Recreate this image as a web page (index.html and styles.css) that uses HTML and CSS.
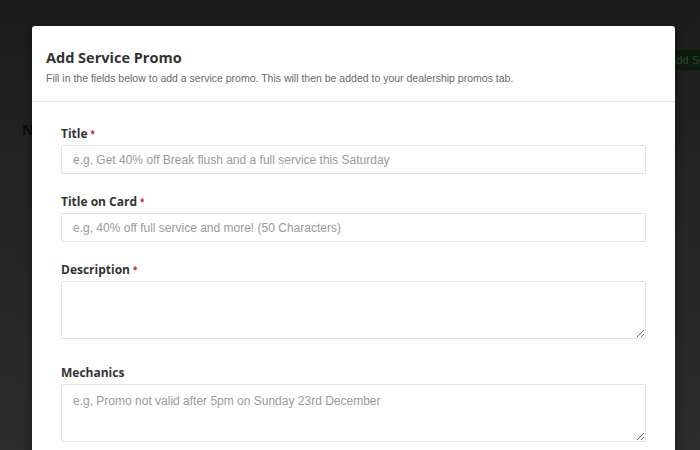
FILE: index.html
```html
<!DOCTYPE html>
<html>
<head>
<meta charset="utf-8">
<link rel="stylesheet" href="styles.css">
</head>
<body>
<div class="page">
  <div class="toolbar">
    <button class="bg-btn">Add Service Promo</button>
  </div>
  <h2 class="bg-heading">New Promos</h2>
</div>
<div class="modal">
  <div class="modal-header">
    <h1 class="modal-title">Add Service Promo</h1>
    <p class="modal-sub">Fill in the fields below to add a service promo. This will then be added to your dealership promos tab.</p>
  </div>
  <div class="modal-body">
    <div class="field">
      <label class="label">Title<span class="req">*</span></label>
      <input class="input" type="text" placeholder="e.g, Get 40% off Break flush and a full service this Saturday">
    </div>
    <div class="field">
      <label class="label">Title on Card<span class="req">*</span></label>
      <input class="input" type="text" placeholder="e.g, 40% off full service and more! (50 Characters)">
    </div>
    <div class="field field-area">
      <label class="label">Description<span class="req">*</span></label>
      <textarea class="textarea"></textarea>
    </div>
    <div class="field field-area">
      <label class="label">Mechanics</label>
      <textarea class="textarea" placeholder="e.g, Promo not valid after 5pm on Sunday 23rd December"></textarea>
    </div>
  </div>
</div>
</body>
</html>
```

FILE: styles.css
```css
html, body {
  margin: 0;
  padding: 0;
  height: 100%;
  overflow: hidden;
}
body {
  background: linear-gradient(to bottom, #1b1b1b 0%, #242424 40%, #2b2b2b 100%);
  font-family: "Liberation Sans", Arial, sans-serif;
}
.page {
  height: 100%;
}
.toolbar {
  display: flex;
  padding: 50px 0 0 659px;
}
.bg-btn {
  flex: none;
  height: 20px;
  padding: 0 10px;
  border: 0;
  border-radius: 2px;
  background: #0a1d0a;
  color: #34423a;
  font-family: "Liberation Sans", Arial, sans-serif;
  font-size: 11px;
  white-space: nowrap;
}
.bg-heading {
  margin: 50px 0 0 22px;
  font-family: "Open Sans", sans-serif;
  font-weight: 700;
  font-size: 14px;
  color: #0c0c0c;
  white-space: nowrap;
}
.modal {
  position: absolute;
  left: 32px;
  top: 26px;
  width: 643px;
  height: 440px;
  background: #fff;
  border-radius: 3px;
  box-shadow: 0 2px 10px rgba(0,0,0,0.4);
}
.modal-header {
  padding: 23px 14px 16px;
  border-bottom: 1px solid #e8e8e8;
}
.modal-title {
  margin: 0;
  font-family: "Open Sans", sans-serif;
  font-weight: 700;
  font-size: 14.5px;
  line-height: 18px;
  color: #333;
}
.modal-sub {
  margin: 4px 0 0;
  font-size: 10.5px;
  line-height: 14px;
  color: #6a6a6a;
}
.modal-body {
  padding: 23px 29px 0 29px;
}
.field {
  display: flex;
  flex-direction: column;
  margin-bottom: 19px;
}
.field-area {
  margin-bottom: 25px;
}
.label {
  font-family: "Open Sans", sans-serif;
  font-weight: 700;
  font-size: 12px;
  line-height: 17px;
  color: #333;
  margin-bottom: 3px;
}
.req {
  color: #c8102e;
  font-size: 8px;
  margin-left: 3px;
  vertical-align: 1px;
}
.input, .textarea {
  box-sizing: border-box;
  width: 585px;
  border: 1px solid #e3e3e3;
  border-radius: 2px;
  padding: 0 11px;
  font-family: "Liberation Sans", Arial, sans-serif;
  font-size: 12px;
  color: #333;
  background: #fff;
  outline: none;
}
.input {
  height: 29px;
}
.textarea {
  height: 58px;
  padding-top: 9px;
  resize: vertical;
}
.input::placeholder, .textarea::placeholder {
  color: #9a9a9a;
}
```
